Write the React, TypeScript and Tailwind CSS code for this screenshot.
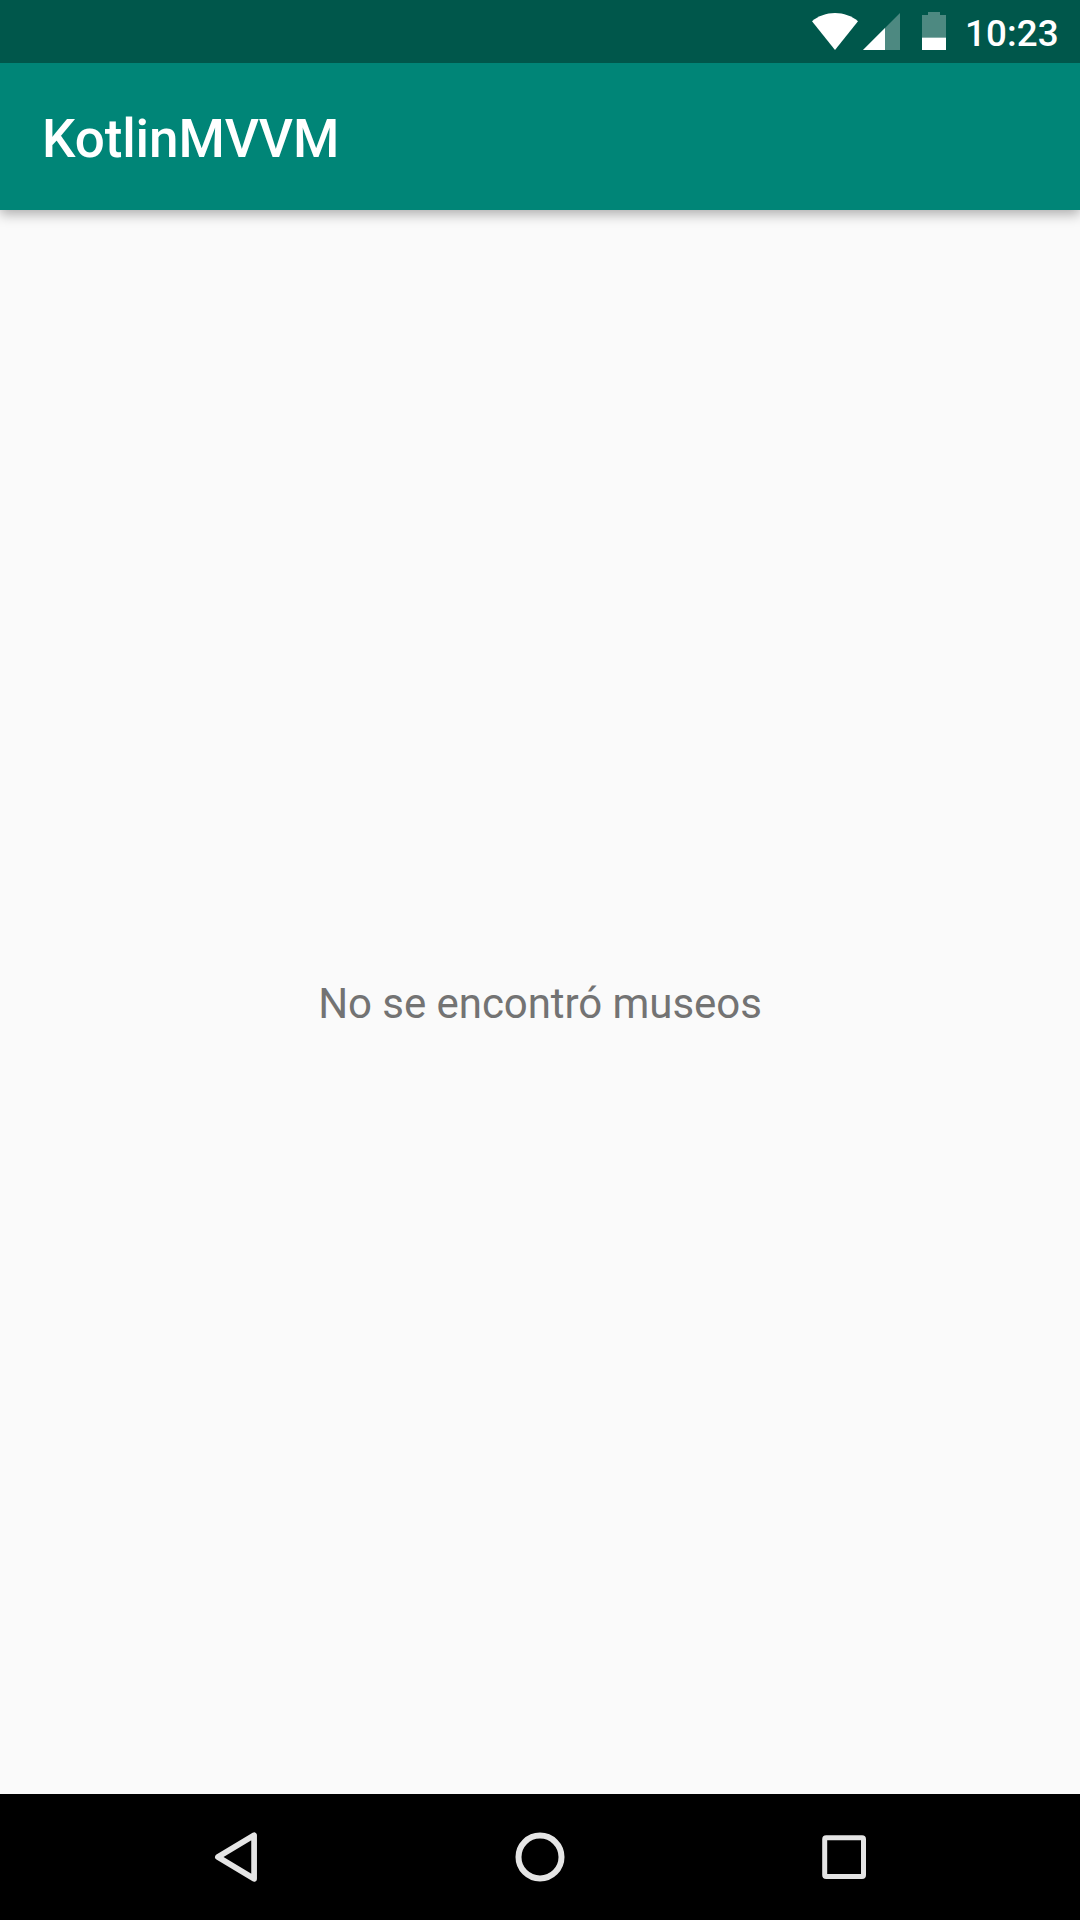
function StatusBar() {
  return (
    <header className="relative z-20 flex h-[63px] items-start bg-[#00574b] pl-[812px] text-white">
      <svg className="mt-[12px] h-[39px] w-[134px] shrink-0" viewBox="0 0 134 39" fill="currentColor">
        <path d="M0 9.2C6.3 4 14.3 1 23 1s16.700 3 23 8.200L23 38z" />
        <path d="M88 1v37H51z" fillOpacity="0.3" />
        <path d="M73 16v22H51z" />
        <path d="M116 0h12v3h6v22.300h-24V3h6z" fillOpacity="0.3" />
        <path d="M110 25.500h24V38h-24z" />
      </svg>
      <span className="ml-[19px] mt-[12px] text-[36.75px] font-medium leading-[43px] tracking-[0.1px]">10:23</span>
    </header>
  );
}

function NavigationBar() {
  return (
    <nav className="flex h-[126px] items-center justify-center gap-[244px] bg-black text-[#e5e5e5]">
      <button aria-label="Back">
        <svg className="size-[60px]" viewBox="0 0 60 60" fill="none" stroke="currentColor" strokeWidth="5.700" strokeLinejoin="round">
          <path d="M11.900 30 48.100 8.200V51.800z" />
        </svg>
      </button>
      <button aria-label="Home">
        <svg className="size-[60px]" viewBox="0 0 60 60" fill="none" stroke="currentColor" strokeWidth="6">
          <circle cx="30" cy="30" r="21.500" />
        </svg>
      </button>
      <button aria-label="Recent apps">
        <svg className="size-[60px]" viewBox="0 0 60 60" fill="none" stroke="currentColor" strokeWidth="5">
          <rect x="10.700" y="10.700" width="38.800" height="38.800" rx="1.500" />
        </svg>
      </button>
    </nav>
  );
}

export default function App() {
  return (
    <div className="flex h-[1920px] w-[1080px] flex-col overflow-hidden bg-[#fafafa] font-['Roboto',sans-serif]">
      <StatusBar />
      <div className="z-10 flex h-[147px] items-center bg-[#008577] pl-[42px] shadow-[0_4px_12px_rgba(0,0,0,0.32)]">
        <h1 className="pt-[5px] text-[53px] font-medium leading-[62px] tracking-[-0.1px] text-white">KotlinMVVM</h1>
      </div>
      <main className="flex flex-1 items-center justify-center">
        <p className="pt-[2px] text-[42px] leading-[49px] tracking-[-0.06px] text-[#737373]">No se encontró museos</p>
      </main>
      <NavigationBar />
    </div>
  );
}
